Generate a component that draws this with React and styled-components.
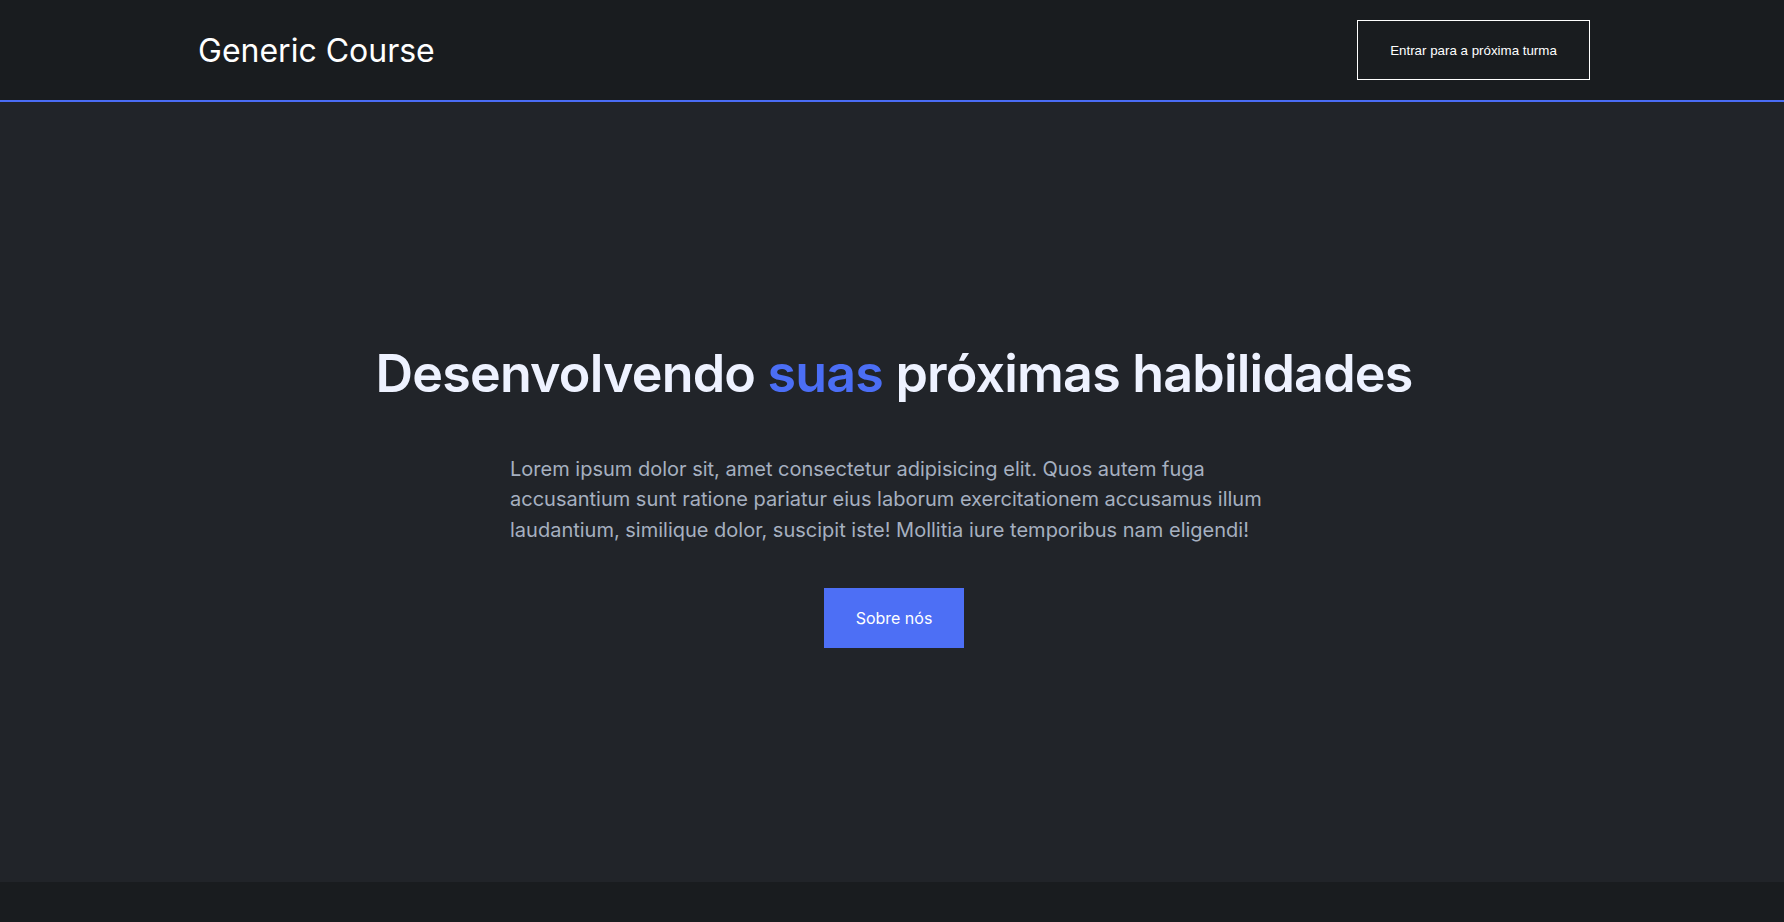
import React from 'react';
import styled, { createGlobalStyle } from 'styled-components';

const GlobalStyle = createGlobalStyle`
  * {
    box-sizing: border-box;
  }

  body {
    margin: 0;
    background-color: #191c1f;
    font-family: Inter, 'Noto Sans', sans-serif;
  }
`;

const Page = styled.div`
  min-height: 922px;
  display: flex;
  flex-direction: column;
  background-color: #191c1f;
`;

const Header = styled.header`
  height: 102px;
  background-color: #191c1f;
  border-bottom: 2px solid #4a6cf4;
`;

const HeaderInner = styled.div`
  max-width: 1396px;
  height: 100%;
  margin: 0 auto;
  display: flex;
  align-items: center;
  justify-content: space-between;
`;

const Logo = styled.h2`
  margin: 0 0 0 4px;
  color: #ffffff;
  font-size: 32px;
  font-weight: 400;
`;

const OutlineButton = styled.button`
  width: 233px;
  height: 60px;
  background: transparent;
  border: 1px solid #ffffff;
  color: #ffffff;
  font-family: 'Liberation Sans', Arial, sans-serif;
  font-size: 13.33px;
  cursor: pointer;
`;

const Hero = styled.main`
  height: 780px;
  padding: 6px 0 0 4px;
  background-color: #212429;
  display: flex;
  flex-direction: column;
  align-items: center;
  justify-content: center;
`;

const Title = styled.h1`
  margin: 0 0 49px;
  color: #eef2ff;
  font-size: 52px;
  font-weight: 600;
  letter-spacing: -0.8px;
`;

const Highlight = styled.span`
  color: #4b6ef5;
`;

const Text = styled.p`
  width: 768px;
  margin: 0 0 43px;
  color: #a6b0c0;
  font-size: 20px;
  line-height: 30.5px;
`;

const PrimaryButton = styled.button`
  width: 140px;
  height: 60px;
  border: none;
  background-color: #4d6ff5;
  color: #ffffff;
  font-family: Inter, sans-serif;
  font-size: 16px;
  cursor: pointer;
`;

const Footer = styled.footer`
  flex: 1;
  background-color: #191c1f;
`;

export default function App() {
  return (
    <Page>
      <GlobalStyle />
      <Header>
        <HeaderInner>
          <Logo>Generic Course</Logo>
          <OutlineButton>Entrar para a próxima turma</OutlineButton>
        </HeaderInner>
      </Header>
      <Hero>
        <Title>
          Desenvolvendo <Highlight>suas</Highlight> próximas habilidades
        </Title>
        <Text>
          Lorem ipsum dolor sit, amet consectetur adipisicing elit. Quos autem fuga
          accusantium sunt ratione pariatur eius laborum exercitationem accusamus illum
          laudantium, similique dolor, suscipit iste! Mollitia iure temporibus nam eligendi!
        </Text>
        <PrimaryButton>Sobre nós</PrimaryButton>
      </Hero>
      <Footer />
    </Page>
  );
}
